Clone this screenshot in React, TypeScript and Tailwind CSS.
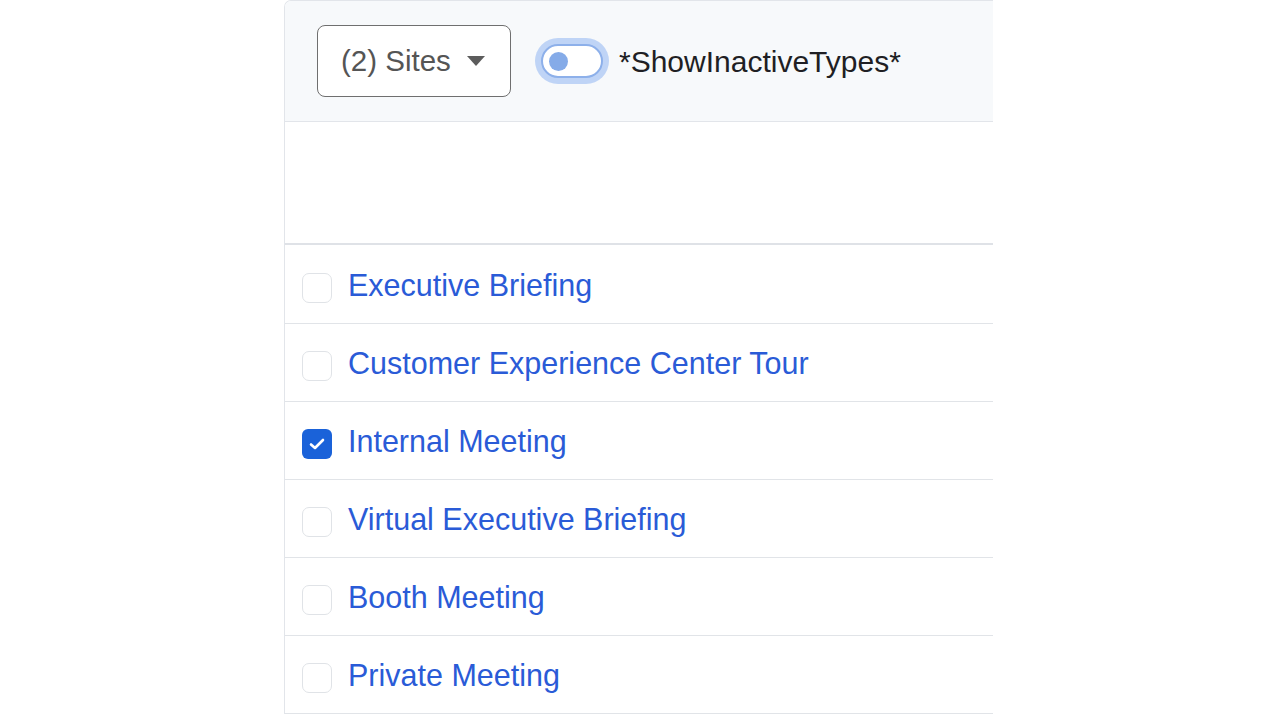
import React from "react";

const rows = [
  { label: "Executive Briefing", checked: false },
  { label: "Customer Experience Center Tour", checked: false },
  { label: "Internal Meeting", checked: true },
  { label: "Virtual Executive Briefing", checked: false },
  { label: "Booth Meeting", checked: false },
  { label: "Private Meeting", checked: false },
];

export default function App() {
  return (
    <div
      className="w-[1280px] h-[720px] bg-white overflow-hidden"
      style={{ fontFamily: '"Liberation Sans", Arial, sans-serif' }}
    >
      <div className="ml-[284px] w-[709px] border-l border-t border-[#e2e5ea] rounded-tl-[7px] overflow-hidden">
        <div className="h-[121px] bg-[#f7f9fb] border-b border-[#e2e5ea] flex items-center pl-[32px]">
          <button className="h-[72px] w-[194px] border-[1.5px] border-[#6f6f6f] rounded-[8px] bg-white flex items-center pl-[23px] gap-[15px] text-[29.5px] text-[#555]">
            <span>(2) Sites</span>
            <svg width="20" height="12" viewBox="0 0 20 12">
              <path d="M1 1 L19 1 L10 11 Z" fill="#5c5c5c" />
            </svg>
          </button>
          <div className="ml-[24px] w-[74px] h-[46px] rounded-full bg-[#bfd4f6] flex items-center justify-center">
            <div className="w-[62px] h-[34px] rounded-full bg-white border-2 border-[#8db0ea] flex items-center pl-[6px]">
              <div className="w-[19px] h-[19px] rounded-full bg-[#85abe8]" />
            </div>
          </div>
          <span className="ml-[10px] text-[30px] text-[#1f1f24]">*ShowInactiveTypes*</span>
        </div>
        <div className="h-[123px] bg-white border-b-2 border-[#dfe2e7]" />
        {rows.map((r, i) => (
          <div
            key={r.label}
            className={`${i === 0 ? "h-[79px]" : "h-[78px]"} border-b border-[#e1e4e8] flex items-center pl-[17px] gap-[17px]`}
          >
            {r.checked ? (
              <div className="mt-[7px] w-[30px] h-[30px] rounded-[6px] bg-[#1a62d9] flex items-center justify-center">
                <svg width="16" height="12" viewBox="0 0 16 12">
                  <path d="M2 6.5 L6 10 L14 2" stroke="white" strokeWidth="2.6" fill="none" strokeLinecap="round" strokeLinejoin="round" />
                </svg>
              </div>
            ) : (
              <div className="mt-[7px] w-[30px] h-[30px] rounded-[7px] bg-white border-[1.5px] border-[#e0e3e7]" />
            )}
            <span className="text-[30.5px] text-[#2a5bd7] pt-[3px] -ml-[1px]">{r.label}</span>
          </div>
        ))}
      </div>
    </div>
  );
}
